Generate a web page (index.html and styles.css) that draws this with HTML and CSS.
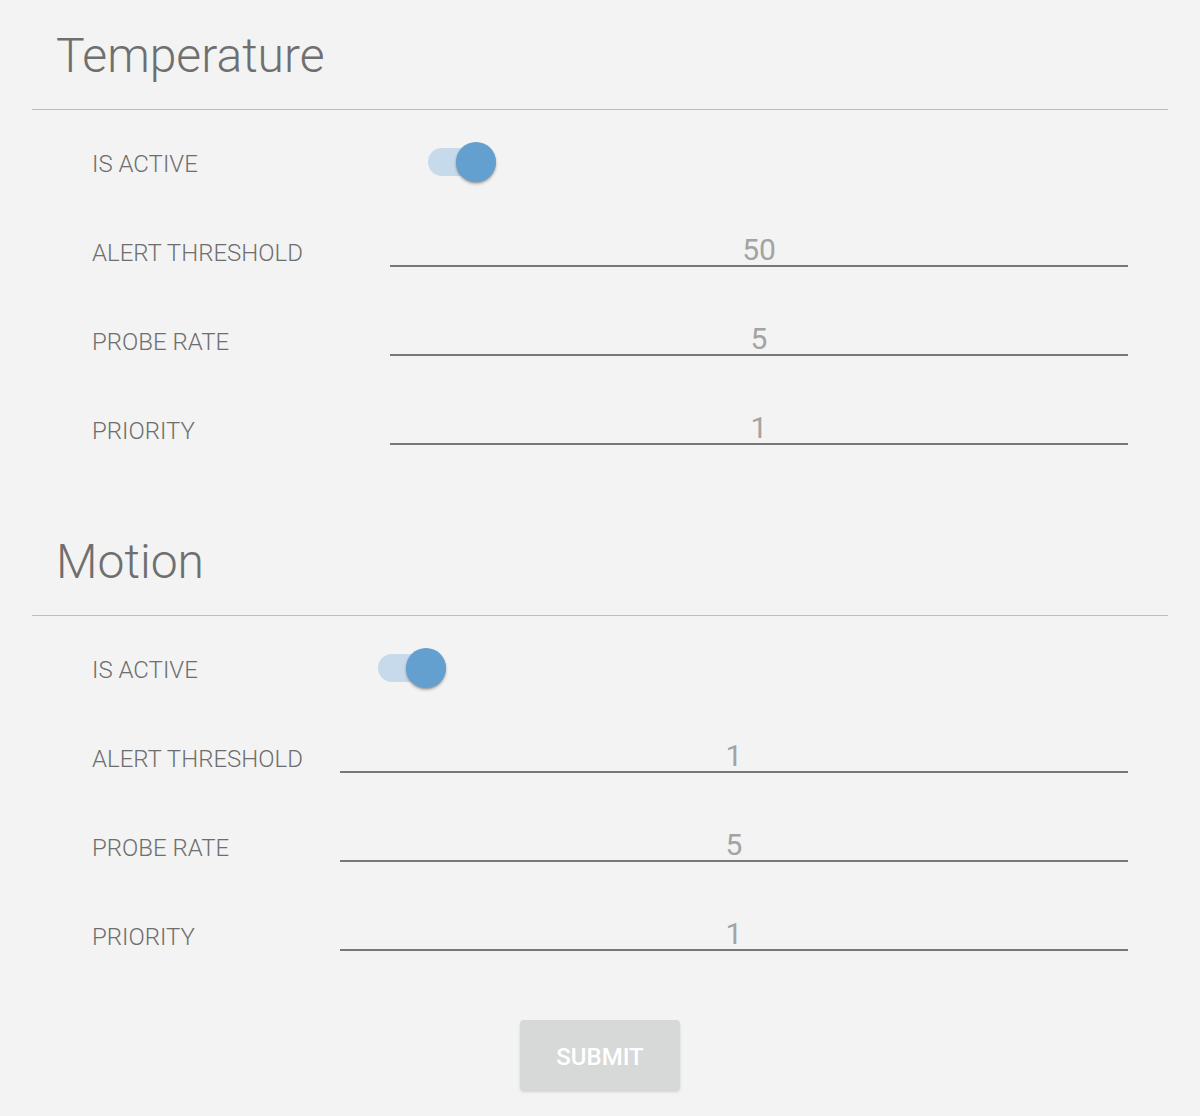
FILE: index.html
```html
<!DOCTYPE html>
<html>
<head>
<meta charset="utf-8">
<link rel="stylesheet" href="styles.css">
</head>
<body>
<div class="page">
  <section class="section">
    <div class="header"><h2 class="title">Temperature</h2></div>
    <div class="rows rows-wide">
      <div class="row">
        <span class="label">IS ACTIVE</span>
        <div class="switch"><span class="track"></span><span class="thumb"></span></div>
      </div>
      <div class="row">
        <span class="label">ALERT THRESHOLD</span>
        <div class="field">50</div>
      </div>
      <div class="row">
        <span class="label">PROBE RATE</span>
        <div class="field">5</div>
      </div>
      <div class="row">
        <span class="label">PRIORITY</span>
        <div class="field">1</div>
      </div>
    </div>
  </section>
  <section class="section section-2">
    <div class="header"><h2 class="title">Motion</h2></div>
    <div class="rows rows-narrow">
      <div class="row">
        <span class="label">IS ACTIVE</span>
        <div class="switch"><span class="track"></span><span class="thumb"></span></div>
      </div>
      <div class="row">
        <span class="label">ALERT THRESHOLD</span>
        <div class="field">1</div>
      </div>
      <div class="row">
        <span class="label">PROBE RATE</span>
        <div class="field">5</div>
      </div>
      <div class="row">
        <span class="label">PRIORITY</span>
        <div class="field">1</div>
      </div>
    </div>
  </section>
  <div class="actions">
    <button class="submit" type="button">SUBMIT</button>
  </div>
</div>
</body>
</html>
```

FILE: styles.css
```css
html, body {
  margin: 0;
  padding: 0;
  background: #f3f3f3;
}
body {
  font-family: Roboto, "Liberation Sans", sans-serif;
  color: #757575;
}
.page {
  padding: 0 32px;
}
.header {
  padding: 28px 24px 25px;
  border-bottom: 1px solid #bdbdbd;
}
.title {
  margin: 0;
  font-size: 48px;
  line-height: 56px;
  font-weight: 300;
  color: #6f6f6f;
}
.section-2 {
  margin-top: 31px;
}
.rows {
  padding: 9px 40px 0 60px;
}
.row {
  height: 89px;
  display: grid;
  align-items: center;
}
.rows-wide .row {
  grid-template-columns: 298px 1fr;
}
.rows-narrow .row {
  grid-template-columns: 248px 1fr;
}
.label {
  font-size: 24px;
  font-weight: 300;
  color: #6e6e6e;
  white-space: nowrap;
}
.field {
  height: 30px;
  line-height: 30px;
  font-size: 30px;
  font-weight: 400;
  color: #a3a3a3;
  text-align: center;
  border-bottom: 2px solid #777777;
  margin-bottom: 3px;
}
.switch {
  position: relative;
  width: 68px;
  height: 40px;
  margin-left: 38px;
  margin-bottom: 4px;
  display: flex;
  align-items: center;
}
.track {
  width: 68px;
  height: 28px;
  border-radius: 14px;
  background: #c6daeb;
}
.thumb {
  position: absolute;
  right: 0;
  top: 0;
  width: 40px;
  height: 40px;
  border-radius: 50%;
  background: #63a0d0;
  box-shadow: 0 2px 3px rgba(0,0,0,0.28), 0 1px 1px rgba(0,0,0,0.12);
}
.actions {
  display: flex;
  justify-content: center;
  padding-top: 39px;
  padding-bottom: 26px;
}
.submit {
  width: 160px;
  height: 70px;
  border: 0;
  border-radius: 4px;
  background: #d7d8d8;
  color: #ffffff;
  font-family: Roboto, "Liberation Sans", sans-serif;
  font-size: 24px;
  font-weight: 500;
  box-shadow: 0 2px 3px rgba(0,0,0,0.14);
  padding: 3px 0 0;
}
```
